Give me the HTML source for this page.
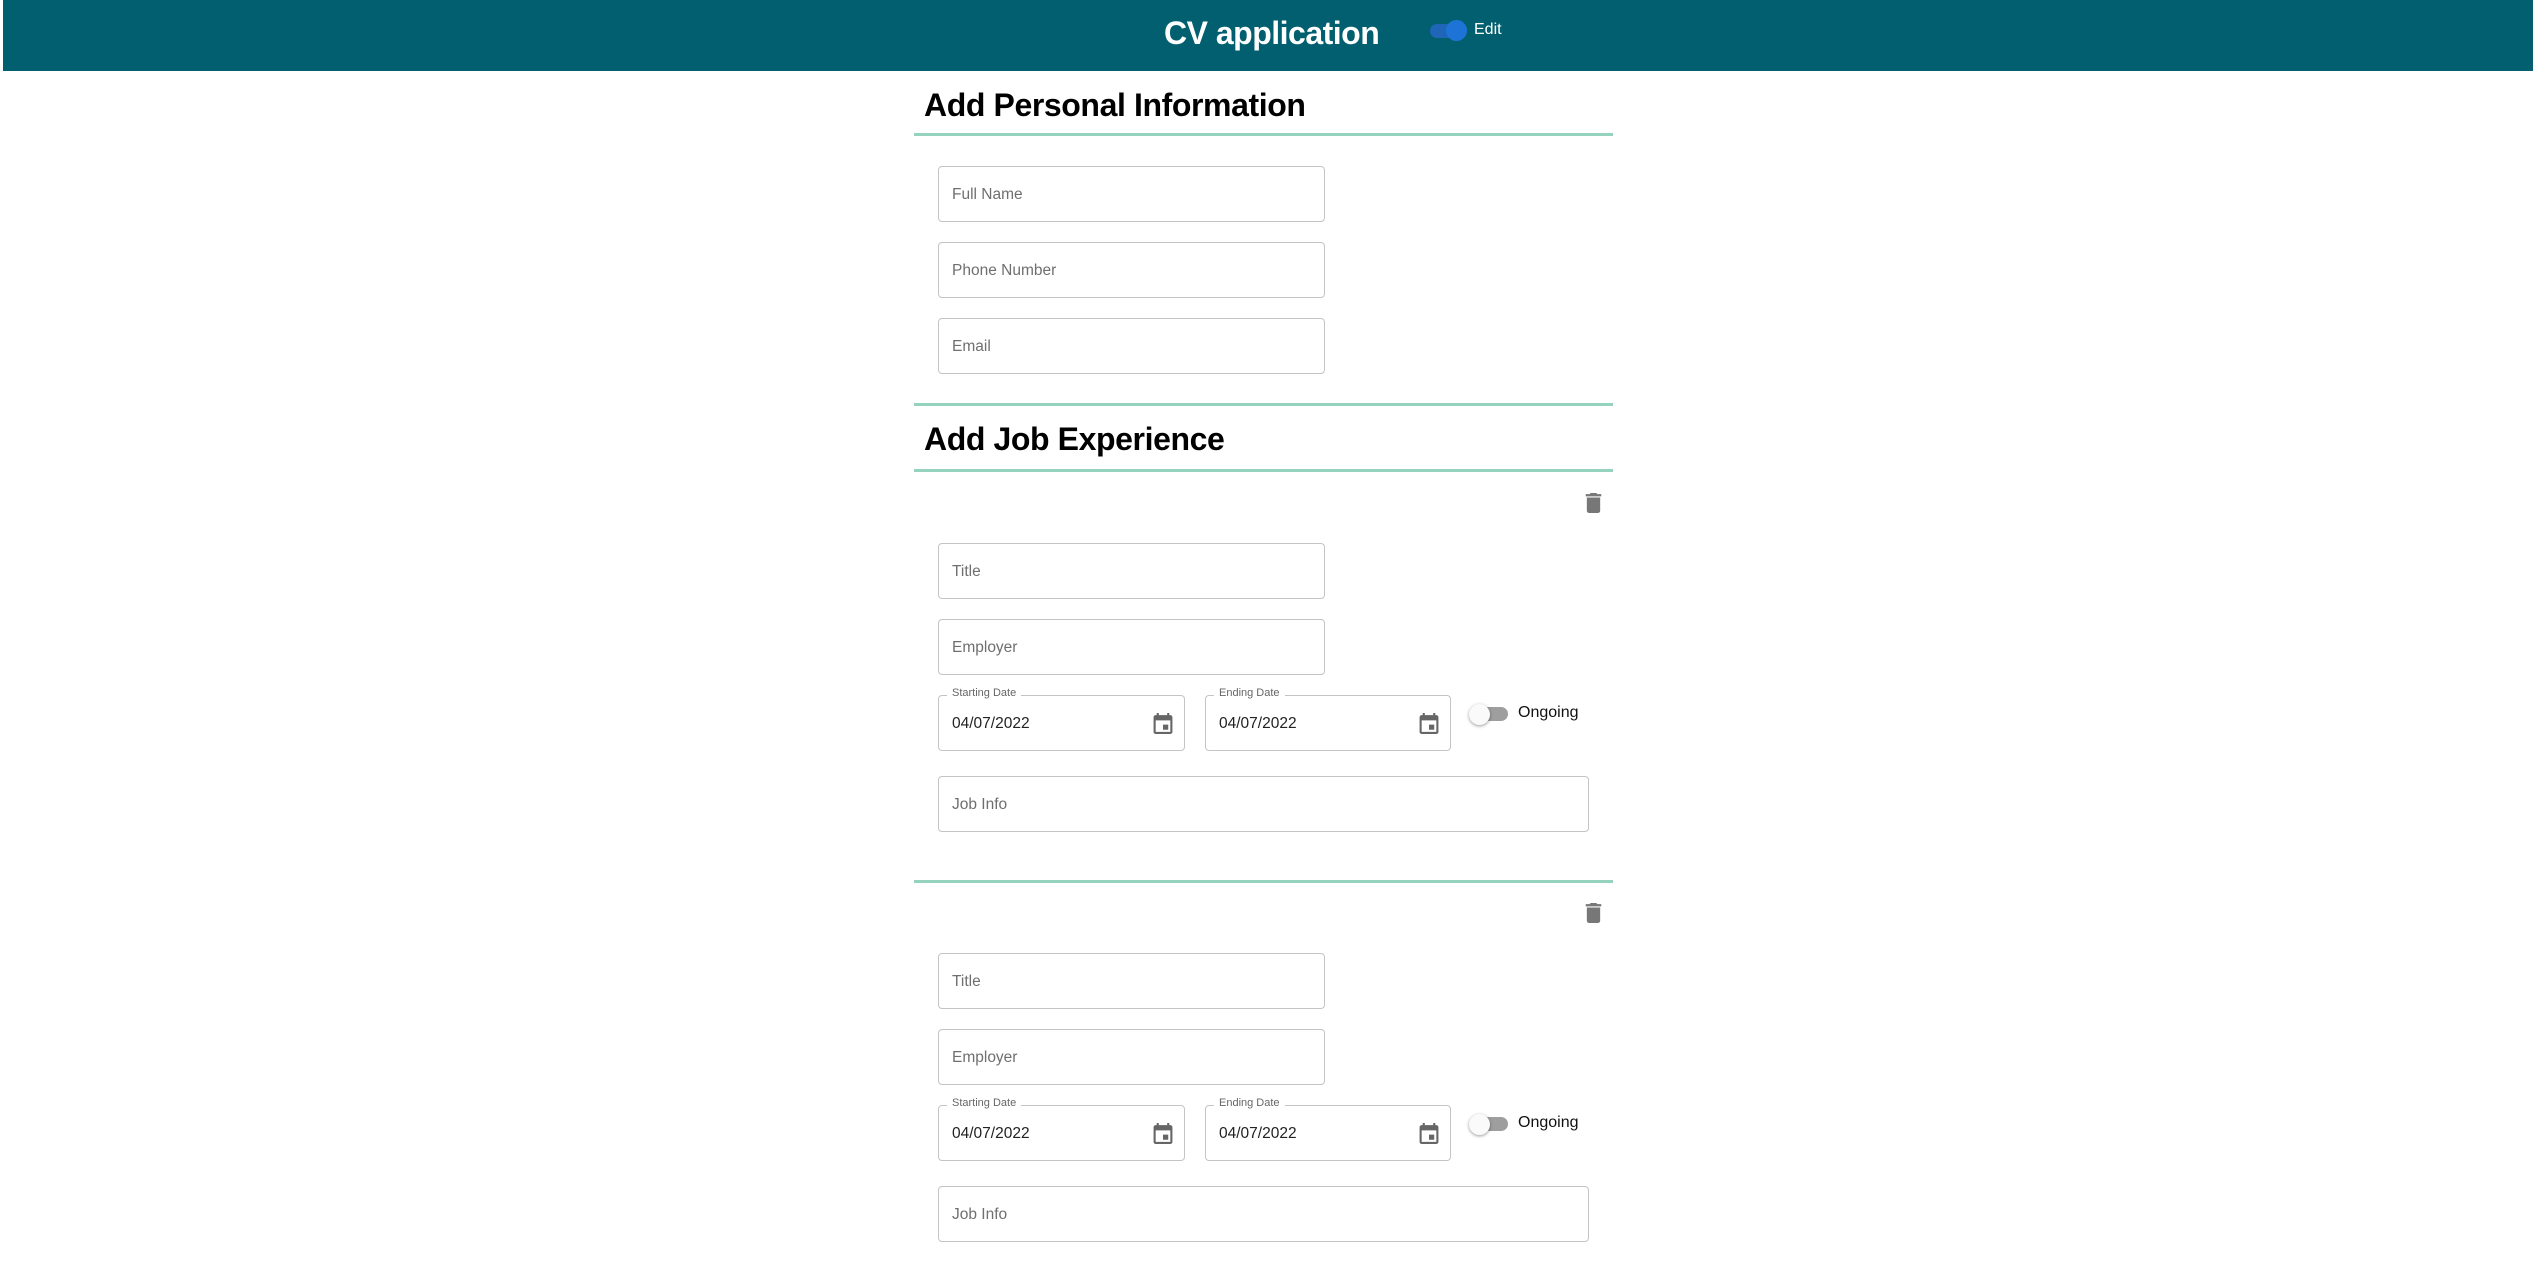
<!DOCTYPE html>
<html><head><meta charset="utf-8"><style>
*{box-sizing:border-box;margin:0;padding:0}
body{width:2533px;height:1276px;background:#fff;font-family:"Liberation Sans",sans-serif;position:relative;overflow:hidden}
.hdr{position:absolute;left:3px;top:0;width:2530px;height:71px;background:#025f70}
.ttl{position:absolute;left:1164px;top:15px;color:#fff;font-weight:bold;font-size:32px;letter-spacing:-0.5px}
.edit{position:absolute;left:1474px;top:21px;color:#fff;font-size:16px}
.tr{position:absolute;border-radius:8px}
.th{position:absolute;border-radius:50%;width:21px;height:21px}
.h{position:absolute;left:924px;font-weight:bold;font-size:32px;color:#000;letter-spacing:-0.4px}
.line{position:absolute;left:914px;width:699px;height:3px;background:#95d3bf}
.in{position:absolute;border:1.5px solid #c4c4c4;border-radius:4px;height:56px;color:#6f6f6f;font-size:15.5px;padding:19px 0 0 13px}
.dt{color:#222}
.lab{position:absolute;top:-9px;left:8px;background:#fff;padding:0 5px;font-size:11px;color:#666}
.cal{position:absolute;right:10px;top:16px}
.og{position:absolute;font-size:16px;color:#111}
</style></head><body>
<div class="hdr"></div>
<div class="ttl">CV application</div>
<div class="tr" style="left:1430px;top:24px;width:34px;height:14px;background:#1f66b8"></div>
<div class="th" style="left:1446px;top:20px;background:#1e74d6"></div>
<div class="edit">Edit</div>

<div class="h" style="top:87px">Add Personal Information</div>
<div class="line" style="top:133px"></div>
<div class="in" style="left:938px;top:166px;width:387px">Full Name</div>
<div class="in" style="left:938px;top:242px;width:387px">Phone Number</div>
<div class="in" style="left:938px;top:318px;width:387px">Email</div>
<div class="line" style="top:403px"></div>
<div class="h" style="top:421px">Add Job Experience</div>
<div class="line" style="top:469px"></div>

<svg style="position:absolute;left:1585px;top:493px" width="17" height="20" viewBox="5 3 14 18"><path fill="#777" d="M6 19c0 1.1.9 2 2 2h8c1.1 0 2-.9 2-2V7H6v12zM19 4h-3.5l-1-1h-5l-1 1H5v2h14V4z"/></svg>
<div class="in" style="left:938px;top:543px;width:387px">Title</div>
<div class="in" style="left:938px;top:619px;width:387px">Employer</div>
<div class="in dt" style="left:938px;top:695px;width:247px"><span class="lab">Starting Date</span>04/07/2022<svg class="cal" width="22" height="22" viewBox="3 1 18 21"><path fill="#666" d="M19 4h-1V2h-2v2H8V2H6v2H5c-1.1 0-2 .9-2 2v14c0 1.1.9 2 2 2h14c1.1 0 2-.9 2-2V6c0-1.1-.9-2-2-2zm0 16H5V9h14v11zM12 13h5v5h-5z"/></svg></div>
<div class="in dt" style="left:1205px;top:695px;width:246px"><span class="lab">Ending Date</span>04/07/2022<svg class="cal" width="22" height="22" viewBox="3 1 18 21"><path fill="#666" d="M19 4h-1V2h-2v2H8V2H6v2H5c-1.1 0-2 .9-2 2v14c0 1.1.9 2 2 2h14c1.1 0 2-.9 2-2V6c0-1.1-.9-2-2-2zm0 16H5V9h14v11zM12 13h5v5h-5z"/></svg></div>
<div class="tr" style="left:1472px;top:707px;width:36px;height:14px;background:#9e9e9e"></div>
<div class="th" style="left:1469px;top:704px;background:#fafafa;box-shadow:0 1px 3px rgba(0,0,0,.4)"></div>
<div class="og" style="left:1518px;top:704px">Ongoing</div>
<div class="in" style="left:938px;top:776px;width:651px">Job Info</div>
<div class="line" style="top:880px"></div>

<svg style="position:absolute;left:1585px;top:903px" width="17" height="20" viewBox="5 3 14 18"><path fill="#777" d="M6 19c0 1.1.9 2 2 2h8c1.1 0 2-.9 2-2V7H6v12zM19 4h-3.5l-1-1h-5l-1 1H5v2h14V4z"/></svg>
<div class="in" style="left:938px;top:953px;width:387px">Title</div>
<div class="in" style="left:938px;top:1029px;width:387px">Employer</div>
<div class="in dt" style="left:938px;top:1105px;width:247px"><span class="lab">Starting Date</span>04/07/2022<svg class="cal" width="22" height="22" viewBox="3 1 18 21"><path fill="#666" d="M19 4h-1V2h-2v2H8V2H6v2H5c-1.1 0-2 .9-2 2v14c0 1.1.9 2 2 2h14c1.1 0 2-.9 2-2V6c0-1.1-.9-2-2-2zm0 16H5V9h14v11zM12 13h5v5h-5z"/></svg></div>
<div class="in dt" style="left:1205px;top:1105px;width:246px"><span class="lab">Ending Date</span>04/07/2022<svg class="cal" width="22" height="22" viewBox="3 1 18 21"><path fill="#666" d="M19 4h-1V2h-2v2H8V2H6v2H5c-1.1 0-2 .9-2 2v14c0 1.1.9 2 2 2h14c1.1 0 2-.9 2-2V6c0-1.1-.9-2-2-2zm0 16H5V9h14v11zM12 13h5v5h-5z"/></svg></div>
<div class="tr" style="left:1472px;top:1117px;width:36px;height:14px;background:#9e9e9e"></div>
<div class="th" style="left:1469px;top:1114px;background:#fafafa;box-shadow:0 1px 3px rgba(0,0,0,.4)"></div>
<div class="og" style="left:1518px;top:1114px">Ongoing</div>
<div class="in" style="left:938px;top:1186px;width:651px">Job Info</div>
</body></html>
